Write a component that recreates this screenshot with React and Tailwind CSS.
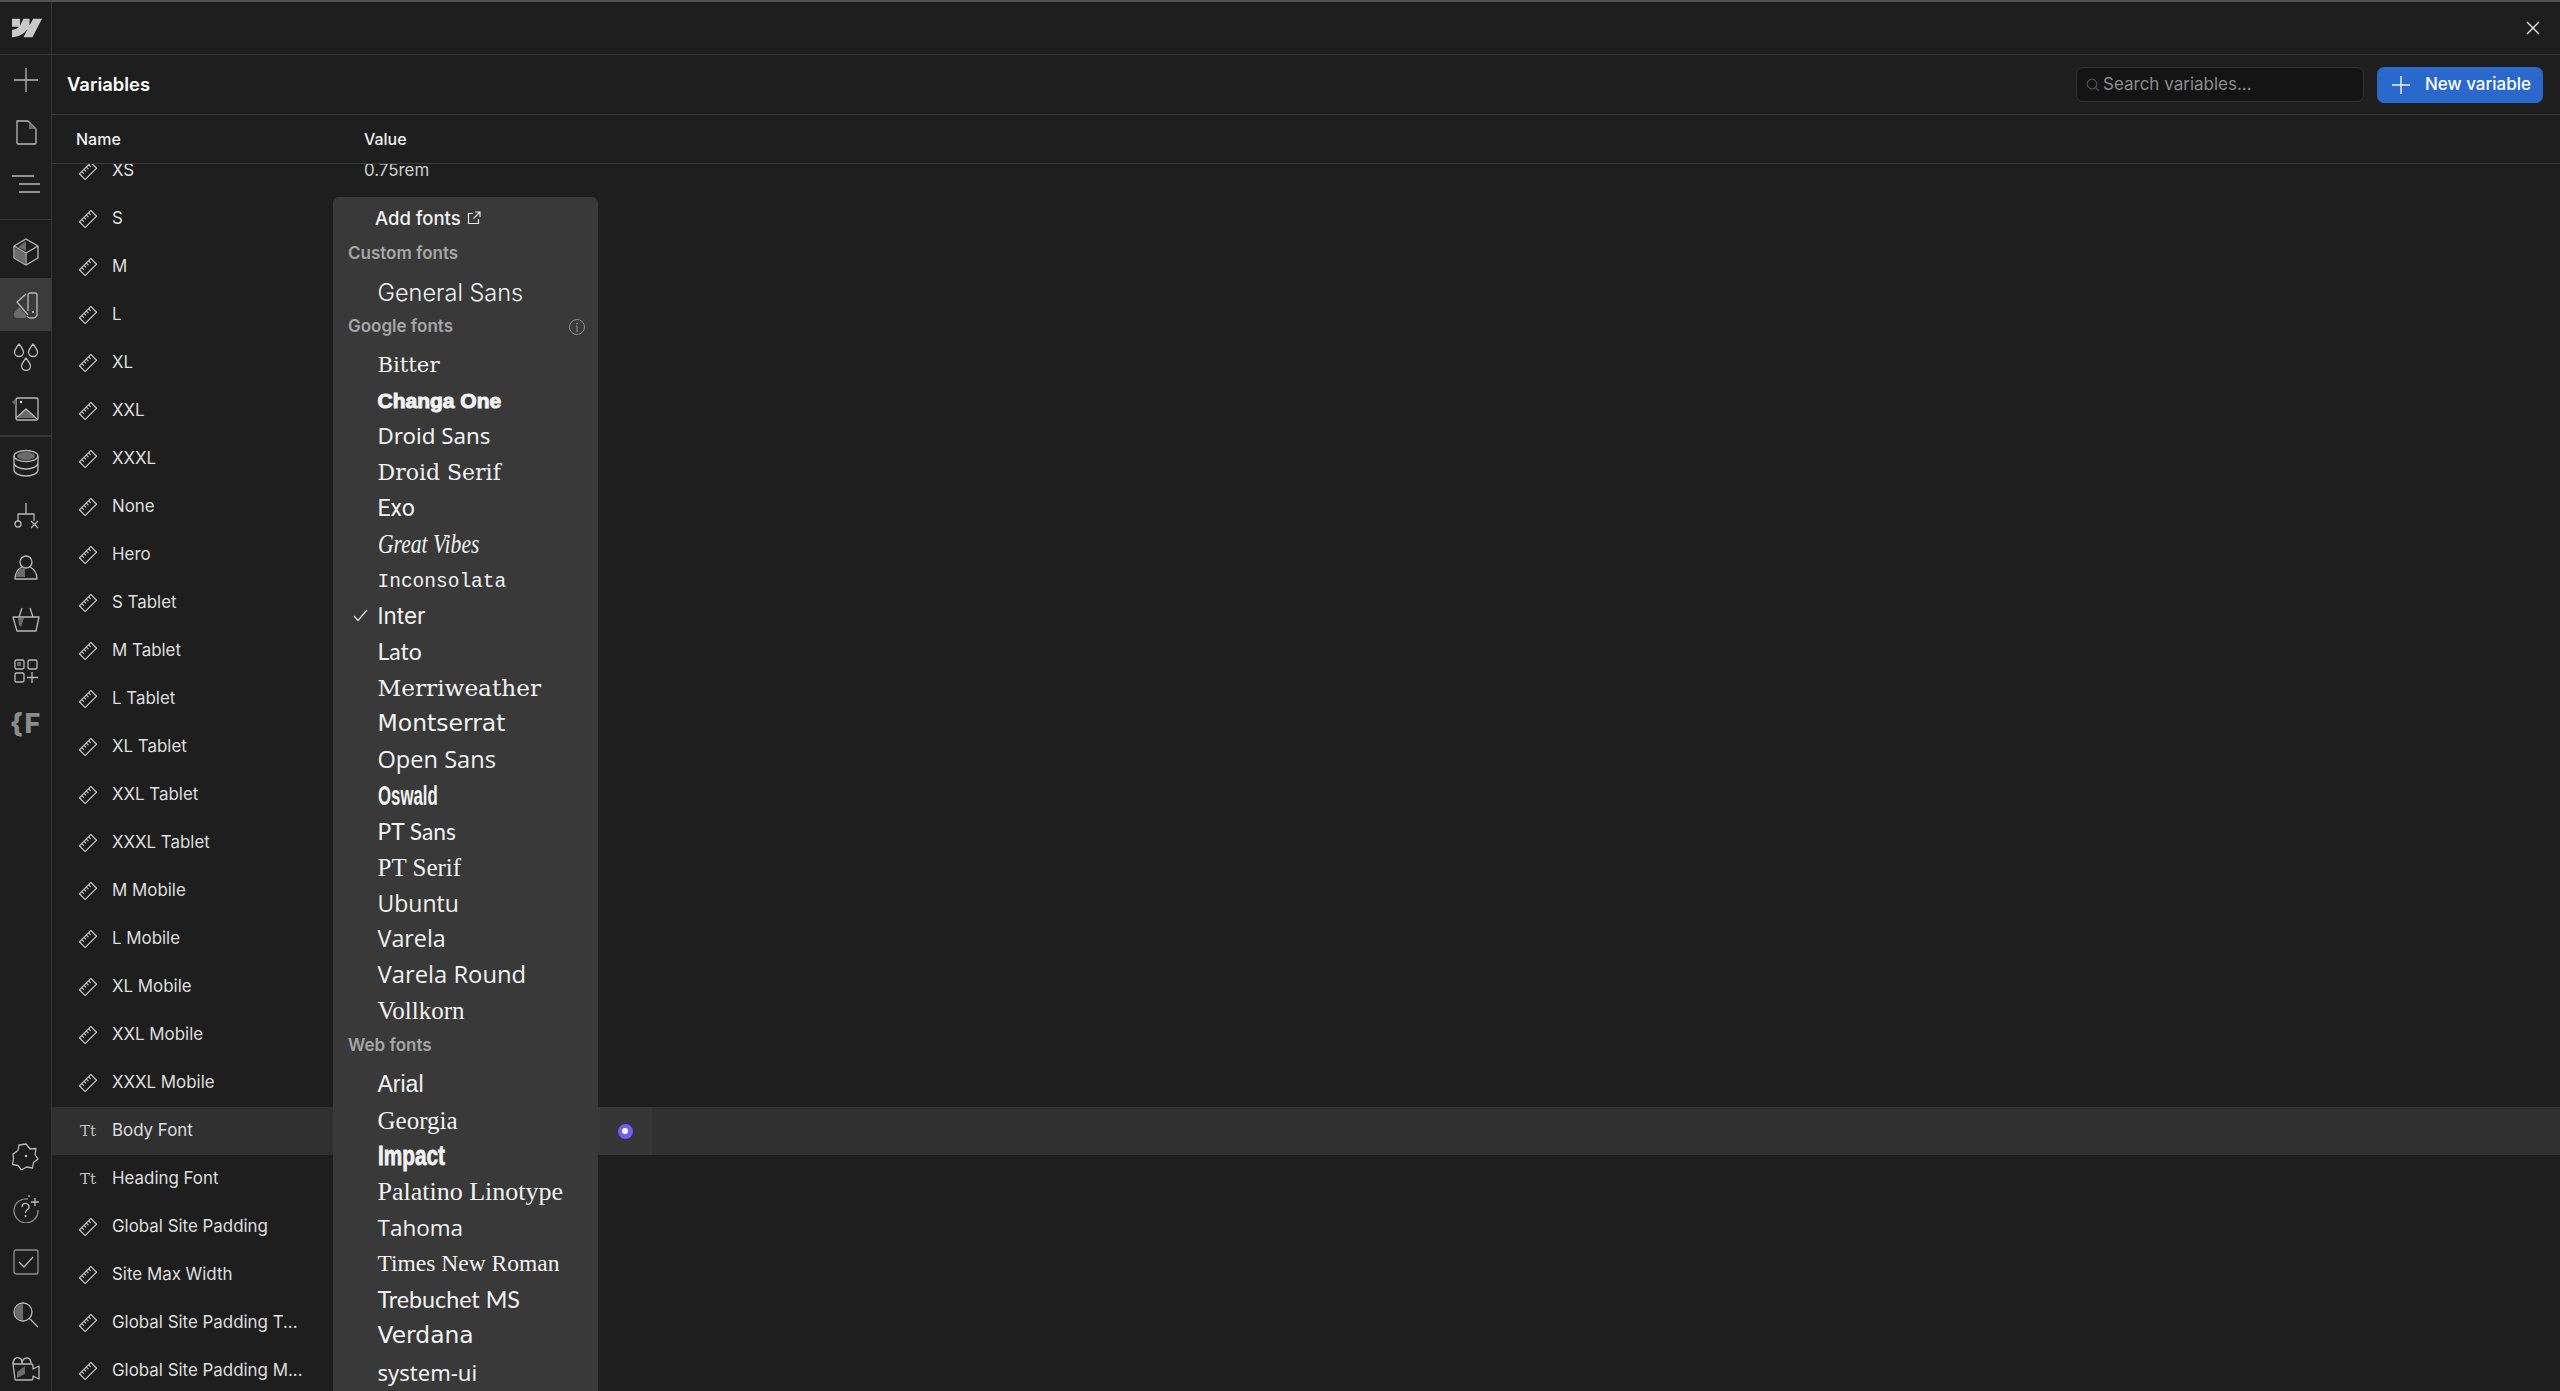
import React from "react";

const Ruler = () => (
  <svg width="18" height="18" viewBox="0 0 18 18" fill="none" stroke="#c8c8c8" strokeWidth="1.2" className="shrink-0">
    <g transform="rotate(-45 9 9)">
      <rect x="1" y="5" width="16" height="8" />
      <path d="M4.200 5v3M7.400 5v3M10.600 5v3M13.800 5v3" />
    </g>
  </svg>
);

const S = ({ children }) => (
  <svg width="28" height="28" viewBox="0 0 28 28" fill="none" stroke="#b9b9b9" strokeWidth="1.3" strokeLinejoin="round">
    {children}
  </svg>
);
const Shade = ({ d }) => <path d={d} fill="#6b6b6b" stroke="none" />;

const icons = {
  plus: <S><path d="M14 2v24M2 14h24" /></S>,
  page: <S><path d="M5 3h11l8 8v14a1 1 0 0 1-1 1H6a1 1 0 0 1-1-1z" /><Shade d="M17 4l7 7h-7z" /></S>,
  nav: <S><path d="M0 6h22M7 14h21M7 22h21" /></S>,
  cube: <S><path d="M14 1l12 7v12l-12 7-12-7V8z" /><path d="M2 8l12 7 12-7M14 15v12" /><Shade d="M3 10l10 5v10l-10-5zM14 3v10l-8-4z" /></S>,
  swatch: <S><Shade d="M2 22l5-6 7 8v3H5a3 3 0 0 1-3-3z" /><path d="M14 3l-9 8 11 13M16 4a2 2 0 0 1 2-2h5a2 2 0 0 1 2 2v18a4 4 0 0 1-4 5h-3a4 4 0 0 1-3-2" /><path d="M16 4v16" /><circle cx="21" cy="21" r="1" fill="#ddd" stroke="none" /></S>,
  drops: <S><path d="M7 1c3 4 4.500 6 4.500 8a4.500 4.500 0 0 1-9 0c0-2 1.500-4 4.500-8zM21 1c3 4 4.500 6 4.500 8a4.500 4.500 0 0 1-9 0c0-2 1.500-4 4.500-8zM14 15c3 4 4.500 6 4.500 8a4.500 4.500 0 0 1-9 0c0-2 1.500-4 4.500-8z" /></S>,
  image: <S><rect x="4" y="3" width="22" height="22" rx="1.500" /><Shade d="M0 7l4-4v8z" /><Shade d="M5 23l9-9 10 9z" /><path d="M4 23l10-9 11 10" /><circle cx="9" cy="7" r="1.200" fill="#ddd" stroke="none" /></S>,
  db: <S><ellipse cx="14" cy="7" rx="12" ry="5.500" /><Shade d="M5 7a9 4 0 0 1 18 0 9 4 0 0 1-18 0" /><path d="M2 7v14c0 3 5 6 12 6s12-3 12-6V7M2 14c0 3 5 6 12 6s12-3 12-6" /></S>,
  logic: <S><path d="M14 2v11M6 20v-7h16v7" /><circle cx="6" cy="23" r="3" /><path d="M19 20l7 7M26 20l-7 7" /></S>,
  user: <S><circle cx="14" cy="9" r="6" /><Shade d="M13 15c-4 0-8 2-9 9h9z" /><path d="M10 14c-4 2-7 6-7 12h22c0-6-3-10-7-12" /></S>,
  basket: <S><path d="M7 12l3-9M21 12l-3-9M1 12h26l-3 14H5z" /><Shade d="M6 13h6l-3 9-2-2z" /></S>,
  apps: <S><rect x="3" y="3" width="9" height="9" rx="1.500" /><rect x="16" y="3" width="9" height="9" rx="1.500" /><rect x="3" y="16" width="9" height="9" rx="1.500" /><Shade d="M5 5h4v4H5z" /><path d="M20 15v11M15 20.500h11" /></S>,
  gear: <S><path d="M14 2l4 5 6-.5-1 6 3 4.500-4.500 3.500-1 5.500-6-1-5 3-3.500-4.500-5.500-1 1-6L1 12l5-3.500L7 3z" /><circle cx="14" cy="14" r="1.200" fill="#ccc" stroke="none" /></S>,
  help: <S><path d="M16 4A12 12 0 1 0 26 15" stroke="#8a8a8a" /><path d="M10 12a3.500 3.500 0 1 1 5 3c-1 .7-1.500 1.300-1.500 3" /><circle cx="13.500" cy="21" r="1" fill="#ccc" stroke="none" /><path d="M23 3v8M19 7h8M17 0v2" /></S>,
  check: <S><rect x="2" y="2" width="24" height="24" rx="2" stroke="#8f8f8f" /><path d="M7 14l5 5 9-10" /></S>,
  search: <S><circle cx="11" cy="11" r="9" /><Shade d="M11 3a8 8 0 0 0 0 16z" /><path d="M17.500 17.500L26 26" /></S>,
  video: <S><path d="M1 10h18a2 2 0 0 1 2 2v3l6-3v13l-6-3v2a2 2 0 0 1-2 2H4a1 1 0 0 1-1-1z" /><Shade d="M5 18l8-6v8l-8 4z" /><path d="M1 10c0-6 4-7 6-6 2 0 3 3 3 6M10 10c0-5 3-6 5-6 3 0 4 3 4 6" /></S>,
};

const SideItem = ({ icon, active, tall }) => (
  <div className={`${tall ? "h-[53px]" : "h-[52px]"} w-full flex items-center justify-center ${active ? "bg-[#3b3b3b]" : ""}`}>{icons[icon]}</div>
);

const rows = ["XS","S","M","L","XL","XXL","XXXL","None","Hero","S Tablet","M Tablet","L Tablet","XL Tablet","XXL Tablet","XXXL Tablet","M Mobile","L Mobile","XL Mobile","XXL Mobile","XXXL Mobile","Body Font","Heading Font","Global Site Padding","Site Max Width","Global Site Padding T...","Global Site Padding M..."];

const fontsA = [
  ["Bitter", "font-['DejaVu_Serif',serif] text-[21.200px]"],
  ["Changa One", "font-['Liberation_Sans',sans-serif] font-bold text-[21px] [-webkit-text-stroke:1px_#f2f2f2]"],
  ["Droid Sans", "font-['Noto_Sans',sans-serif] text-[22.300px]"],
  ["Droid Serif", "font-['DejaVu_Serif',serif] text-[22px]"],
  ["Exo", "font-['Roboto',sans-serif] text-[23px]"],
  ["Great Vibes", "font-['Liberation_Serif',serif] italic text-[27px] inline-block origin-left scale-x-[0.8]"],
  ["Inconsolata", "font-['Liberation_Mono',monospace] text-[19.500px] translate-y-[3px]"],
  ["Inter", "font-['Inter',sans-serif] text-[22.500px]"],
  ["Lato", "font-['Lato',sans-serif] text-[23px]"],
  ["Merriweather", "font-['DejaVu_Serif',serif] text-[23.200px]"],
  ["Montserrat", "font-['DejaVu_Sans',sans-serif] text-[23.500px]"],
  ["Open Sans", "font-['Open_Sans',sans-serif] text-[23.600px]"],
  ["Oswald", "font-['Liberation_Sans',sans-serif] font-bold text-[28px] inline-block origin-left scale-x-[0.6]"],
  ["PT Sans", "font-['Lato',sans-serif] text-[22.800px]"],
  ["PT Serif", "font-['Liberation_Serif',serif] text-[25px]"],
  ["Ubuntu", "font-['Open_Sans',sans-serif] text-[23px]"],
  ["Varela", "font-['Open_Sans',sans-serif] text-[23.300px]"],
  ["Varela Round", "font-['Open_Sans',sans-serif] text-[23.800px]"],
  ["Vollkorn", "font-['Liberation_Serif',serif] text-[25px]"],
];
const fontsB = [
  ["Arial", "font-['Liberation_Sans',sans-serif] text-[23px]"],
  ["Georgia", "font-['Liberation_Serif',serif] text-[25px]"],
  ["Impact", "font-['Liberation_Sans',sans-serif] font-bold text-[27px] inline-block origin-left scale-x-[0.77] [-webkit-text-stroke:0.8px_#f2f2f2]"],
  ["Palatino Linotype", "font-['Liberation_Serif',serif] text-[26px]"],
  ["Tahoma", "font-['Open_Sans',sans-serif] text-[22.500px]"],
  ["Times New Roman", "font-['Liberation_Serif',serif] text-[23.500px]"],
  ["Trebuchet MS", "font-['Lato',sans-serif] text-[23.300px]"],
  ["Verdana", "font-['DejaVu_Sans',sans-serif] text-[23.400px]"],
  ["system-ui", "font-['Noto_Sans',sans-serif] text-[22px]"],
];

const FontItem = ({ name, cls, checked }) => (
  <div className="h-[35.900px] relative flex items-center pl-[44.500px] text-[#f2f2f2] whitespace-nowrap leading-none">
    {checked && (
      <svg className="absolute left-[20px] top-[11px]" width="15" height="13" viewBox="0 0 15 13" fill="none" stroke="#e0e0e0" strokeWidth="1.2">
        <path d="M1 7l4 4.500L14 1" />
      </svg>
    )}
    <span className={cls}>{name}</span>
  </div>
);

const Heading = ({ children, cls, info }) => (
  <div className={`flex items-center justify-between pl-[15px] pr-[13px] text-[17px] font-semibold text-[#a6a6a6] ${cls}`}>
    <span>{children}</span>
    {info && (
      <svg width="16" height="16" viewBox="0 0 16 16" fill="none" stroke="#8e8e8e" strokeWidth="1">
        <circle cx="8" cy="8" r="7.500" />
        <path d="M8 7v5M6.800 7H8M6.800 12h2.400" />
        <circle cx="8" cy="4.600" r="0.800" fill="#9a9a9a" stroke="none" />
      </svg>
    )}
  </div>
);

export default function App() {
  return (
    <div className="w-[2560px] h-[1391px] bg-[#1e1e1e] flex overflow-hidden border-t-2 border-[#505050] font-['Inter',sans-serif]">
      <aside className="w-[52px] shrink-0 border-r border-[#383838] flex flex-col overflow-hidden">
        <div className="h-[53px] shrink-0 border-b border-[#383838] flex items-center justify-center pl-[2px]">
          <svg width="30" height="30" viewBox="0 0 24 24" fill="#c9c9c9">
            <path d="m24 4.515-7.658 14.97H9.149l3.205-6.204h-.144C9.566 16.713 5.621 18.973 0 19.485v-6.118s3.596-.213 5.71-2.435H0V4.515h6.417v5.278l.144-.001 2.622-5.277h4.854v5.244h.144l2.72-5.244H24Z" />
          </svg>
        </div>
        <div className="pb-[9px] border-b border-[#383838] w-full -mt-[1px]">
          <SideItem icon="plus" /><SideItem icon="page" /><SideItem icon="nav" />
        </div>
        <div className="border-b-2 border-[#383838] w-full pt-[6px]">
          <SideItem icon="cube" /><SideItem icon="swatch" active tall /><SideItem icon="drops" /><SideItem icon="image" />
        </div>
        <SideItem icon="db" /><SideItem icon="logic" /><SideItem icon="user" /><SideItem icon="basket" /><SideItem icon="apps" />
        <div className="h-[52px] w-full flex items-center justify-center text-[#8c8c8c] text-[27px] font-extrabold tracking-[1px] leading-none shrink-0">{"{F"}</div>
        <div className="mt-auto -mb-[3px]">
          <SideItem icon="gear" tall /><SideItem icon="help" tall /><SideItem icon="check" tall /><SideItem icon="search" tall /><SideItem icon="video" tall />
        </div>
      </aside>

      <main className="flex-1 min-w-0 relative flex flex-col">
        <div className="h-[53px] shrink-0 border-b border-[#383838] flex items-center justify-end pr-[20px]">
          <svg width="14" height="14" viewBox="0 0 14 14" stroke="#ededed" strokeWidth="1.400"><path d="M1 1l12 12M13 1L1 13" /></svg>
        </div>
        <div className="h-[60px] shrink-0 border-b border-[#383838] flex items-center justify-between pl-[15px] pr-[17px]">
          <h1 className="text-[18.400px] font-semibold text-white">Variables</h1>
          <div className="flex items-center gap-[13px]">
            <div className="w-[288px] h-[35px] bg-[#141414] border border-[#333333] rounded-[7px] flex items-center pl-[9px] gap-[3px] text-[17px] text-[#8c8c8c]">
              <svg width="14" height="14" viewBox="0 0 14 14" fill="none" stroke="#4f4f4f" strokeWidth="1.200"><circle cx="6" cy="6" r="4.800" /><path d="M9.500 9.500L13 13" /></svg>
              <span>Search variables...</span>
            </div>
            <div className="w-[166px] h-[36px] bg-[#2b68cb] rounded-[7px] flex items-center pl-[15px] gap-[15px] text-white text-[17px] font-medium">
              <svg width="18" height="18" viewBox="0 0 18 18" stroke="#f2f2f2" strokeWidth="1.400"><path d="M9 0v18M0 9h18" /></svg>
              <span>New variable</span>
            </div>
          </div>
        </div>
        <div className="h-[49px] shrink-0 border-b border-[#383838] flex items-center pl-[24px] text-[16px] font-medium text-[#f0f0f0]">
          <span className="w-[288px]">Name</span>
          <span>Value</span>
        </div>
        <div className="flex-1 overflow-hidden">
          <div className="-mt-[17px]">
            {rows.map((r, i) => {
              const hl = r === "Body Font";
              return (
                <div key={r} className={`h-[48px] flex items-center pl-[27px] text-[16.900px] text-[#dedede] ${hl ? "bg-[#303030]" : ""}`}>
                  {r === "Body Font" || r === "Heading Font" ? (
                    <span className="w-[18px] text-center font-['DejaVu_Serif',serif] text-[15px] text-[#c4c4c4] shrink-0">Tt</span>
                  ) : <Ruler />}
                  <span className="ml-[15px] w-[252px] shrink-0 whitespace-nowrap">{r}</span>
                  {i === 0 && <span className="text-[#cfcfcf]">0.75rem</span>}
                  {hl && (
                    <span className="ml-[234px] w-[54px] h-full bg-[#363636] flex items-center justify-center">
                      <span className="w-[17px] h-[17px] rounded-full bg-[#7260ea] border border-[#2d2560] flex items-center justify-center">
                        <span className="w-[6px] h-[6px] rounded-full bg-white" />
                      </span>
                    </span>
                  )}
                </div>
              );
            })}
          </div>
        </div>

        <div className="absolute left-[281px] top-[195px] w-[265px] h-[1300px] bg-[#393939] rounded-t-[6px] pt-[4px]">
          <div className="h-[36px] flex items-center pl-[42px] gap-[6px] text-[18.500px] font-medium text-[#f2f2f2]">
            <span>Add fonts</span>
            <svg width="14" height="14" viewBox="0 0 14 14" fill="none" stroke="#e8e8e8" strokeWidth="1.200" className="-mt-[2px]">
              <path d="M6 2.500H1.500v10h10V8M8 1h5v5M13 1L6.500 7.500" />
            </svg>
          </div>
          <Heading cls="h-[38px] pb-[4px]">Custom fonts</Heading>
          <FontItem name="General Sans" cls="font-['Inter',sans-serif] font-light text-[23.500px]" />
          <Heading cls="h-[36px] pb-[4px]" info>Google fonts</Heading>
          {fontsA.map(([n, c]) => <FontItem key={n} name={n} cls={c} checked={n === "Inter"} />)}
          <Heading cls="h-[38px] pb-[4px]">Web fonts</Heading>
          {fontsB.map(([n, c]) => <FontItem key={n} name={n} cls={c} />)}
        </div>
      </main>
    </div>
  );
}
